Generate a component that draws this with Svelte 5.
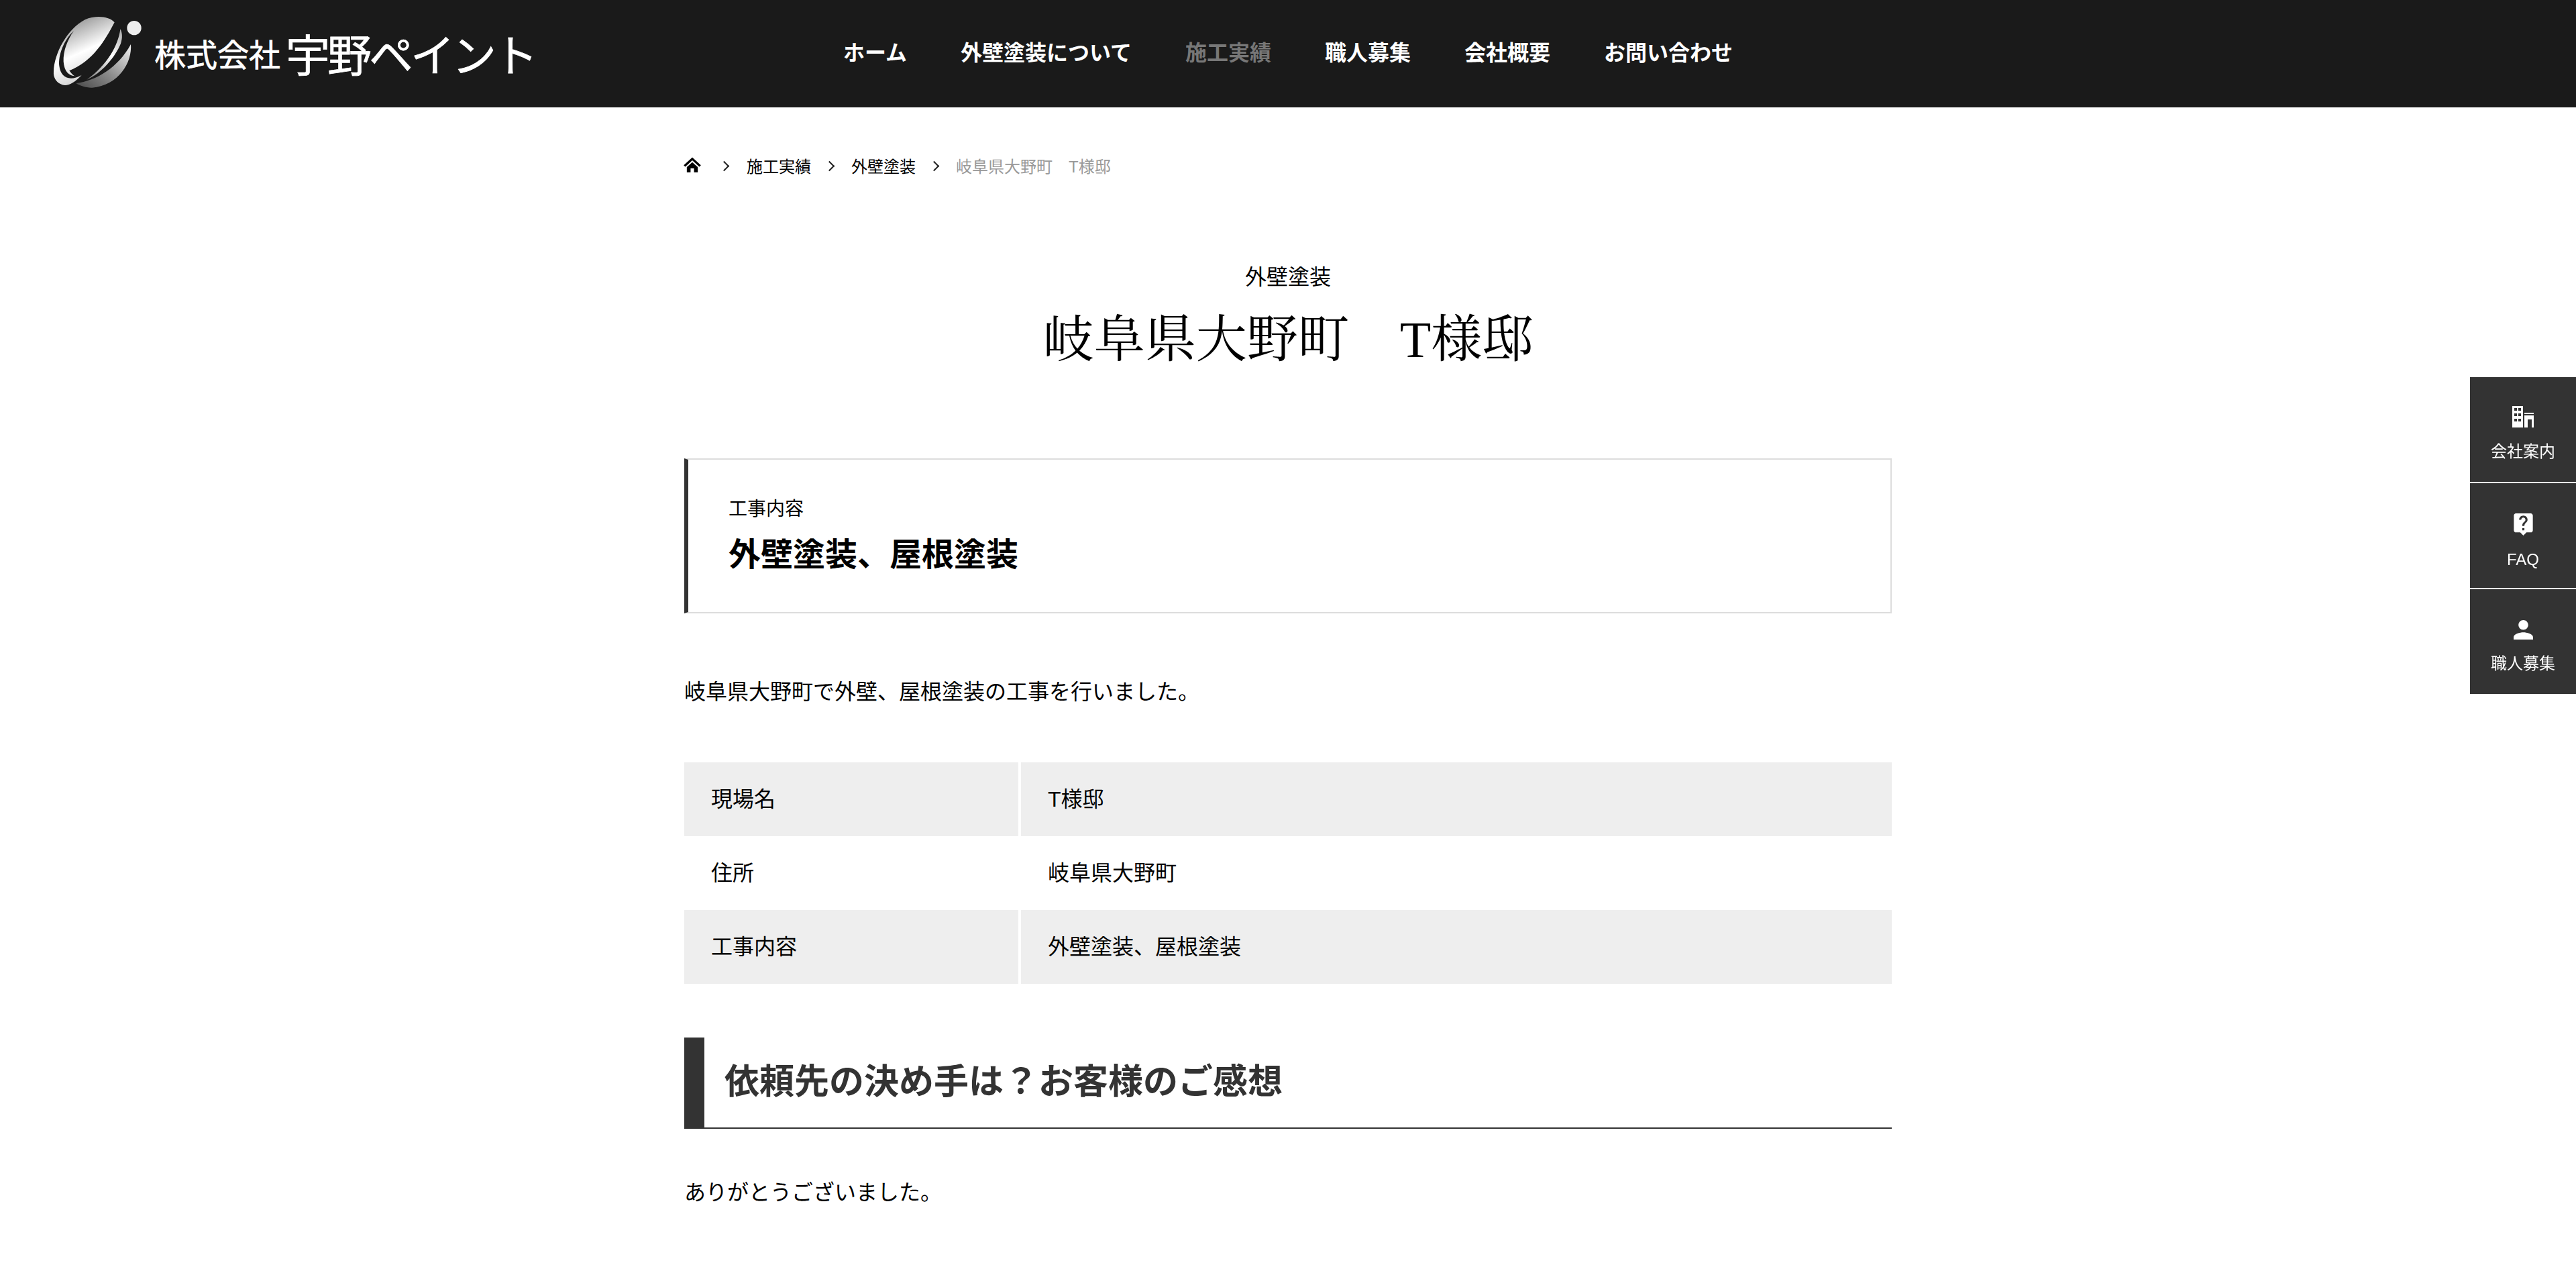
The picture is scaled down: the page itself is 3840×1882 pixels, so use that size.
<script>
	const nav = [
		{ label: 'ホーム' },
		{ label: '外壁塗装について' },
		{ label: '施工実績', current: true },
		{ label: '職人募集' },
		{ label: '会社概要' },
		{ label: 'お問い合わせ' }
	];
	const rows = [
		['現場名', 'T様邸'],
		['住所', '岐阜県大野町'],
		['工事内容', '外壁塗装、屋根塗装']
	];
</script>

<header class="site-header">
	<a class="logo" href="#top">
		<svg class="mark" viewBox="0 0 540 390" aria-hidden="true">
			<defs>
				<linearGradient id="body" x1="0.3" y1="0" x2="0.7" y2="1">
					<stop offset="0" stop-color="#8a8a8a" />
					<stop offset="0.5" stop-color="#ffffff" />
					<stop offset="1" stop-color="#c4c4c4" />
				</linearGradient>
				<linearGradient id="lower" x1="1" y1="0" x2="0" y2="1">
					<stop offset="0" stop-color="#f2f2f2" />
					<stop offset="0.55" stop-color="#8a8a8a" />
					<stop offset="1" stop-color="#4a4a4a" />
				</linearGradient>
				<linearGradient id="swoosh" x1="0" y1="1" x2="1" y2="0">
					<stop offset="0" stop-color="#777" />
					<stop offset="0.6" stop-color="#fff" />
					<stop offset="1" stop-color="#aaa" />
				</linearGradient>
			</defs>
			<path
				fill="url(#body)"
				d="M60 290C62 210 120 100 200 58C250 36 310 44 332 70C290 150 235 245 130 286C155 320 165 315 185 305C150 345 115 360 90 345C70 335 58 315 60 290Z"
			/>
			<path
				fill="#1a1a1a"
				d="M150 108C105 150 80 215 85 265C92 320 135 335 185 305C140 320 108 300 104 245C102 200 120 150 150 108Z"
			/>
			<path fill="url(#swoosh)" d="M358 100C350 170 300 262 208 326C275 298 335 225 360 165C368 140 368 118 358 100Z" />
			<path fill="url(#lower)" d="M405 168C412 250 350 352 232 362C205 363 175 352 160 342C250 332 350 270 405 168Z" />
			<circle cx="420" cy="95" r="32" fill="#eee" />
		</svg>
		<span class="logo-text"><span class="kabu">株式会社</span><span class="name">宇野ペイント</span></span>
	</a>
	<nav class="main-nav">
		{#each nav as item}
			<a href="#top" class:current={item.current}>{item.label}</a>
		{/each}
	</nav>
	<div></div>
</header>

<main class="content">
	<ol class="crumbs">
		<li>
			<svg class="home" viewBox="0 0 24 24" aria-hidden="true">
				<path d="M12 3 1 13l2 2 9-8.2L21 15l2-2z" />
				<path d="M5 15.5 12 9.3l7 6.2V22h-4.8v-5H9.8v5H5z" />
			</svg>
		</li>
		<li class="sep first"></li>
		<li>施工実績</li>
		<li class="sep"></li>
		<li>外壁塗装</li>
		<li class="sep"></li>
		<li class="here">岐阜県大野町　T様邸</li>
	</ol>

	<p class="category">外壁塗装</p>
	<h1>岐阜県大野町　T様邸</h1>

	<section class="work-box">
		<p class="work-label">工事内容</p>
		<p class="work-value">外壁塗装、屋根塗装</p>
	</section>

	<p class="lead">岐阜県大野町で外壁、屋根塗装の工事を行いました。</p>

	<table>
		<tbody>
			{#each rows as row}
				<tr>
					<th>{row[0]}</th>
					<td>{row[1]}</td>
				</tr>
			{/each}
		</tbody>
	</table>

	<h2>依頼先の決め手は？お客様のご感想</h2>
	<p class="thanks">ありがとうございました。</p>
</main>

<aside class="side-links">
	<a href="#top">
		<svg class="i-building" viewBox="0 0 32 32" aria-hidden="true">
			<path
				fill-rule="evenodd"
				d="M0 0h16v32H0zM3 3v4h4V3zM9 3v4h4V3zM3 11v4h4v-4zM9 11v4h4v-4zM3 19v4h4v-4zM9 19v4h4v-4z"
			/>
			<path d="M18 10h14v2H18zM18 14h14v18h-3V20h-6v12h-5z" />
		</svg>
		<span>会社案内</span>
	</a>
	<a href="#top">
		<svg viewBox="3 2 18 21" class="i-faq" aria-hidden="true">
			<path
				d="M19 2H5c-1.11 0-2 .9-2 2v14c0 1.1.89 2 2 2h4l3 3 3-3h4c1.1 0 2-.9 2-2V4c0-1.1-.9-2-2-2zm-6 16h-2v-2h2v2zm2.07-7.75l-.9.92C13.45 11.9 13 12.5 13 14h-2v-.5c0-1.1.45-2.1 1.17-2.83l1.24-1.26c.37-.36.59-.86.59-1.41 0-1.1-.9-2-2-2s-2 .9-2 2H8c0-2.21 1.79-4 4-4s4 1.79 4 4c0 .88-.36 1.68-.93 2.25z"
			/>
		</svg>
		<span>FAQ</span>
	</a>
	<a href="#top">
		<svg viewBox="4 4 16 16" class="i-person" aria-hidden="true">
			<path d="M12 12c2.21 0 4-1.79 4-4s-1.79-4-4-4-4 1.79-4 4 1.79 4 4 4zm0 2c-2.67 0-8 1.34-8 4v2h16v-2c0-2.66-5.33-4-8-4z" />
		</svg>
		<span>職人募集</span>
	</a>
</aside>

<style>
	:global(body) {
		background: #fff;
		color: #000;
		font-family: 'Liberation Sans', 'Noto Sans CJK JP', sans-serif;
		overflow: hidden;
	}

	a {
		color: inherit;
		text-decoration: none;
	}

	p,
	h1,
	h2,
	ol {
		margin: 0;
		padding: 0;
	}

	.site-header {
		background: #1a1a1a;
		color: #fff;
		height: 160px;
		display: grid;
		grid-template-columns: 1fr auto 1fr;
		align-items: center;
	}

	.logo {
		display: flex;
		align-items: center;
		padding-left: 60px;
	}

	.mark {
		width: 180px;
		height: 130px;
		margin-top: -10px;
		flex: none;
	}

	.logo-text {
		display: flex;
		align-items: center;
		white-space: nowrap;
		margin-left: -10px;
		margin-top: -4px;
		-webkit-text-stroke: 0.7px #fff;
	}

	.kabu {
		font-size: 47px;
	}

	.name {
		font-size: 66px;
		letter-spacing: -4px;
		margin-left: 8px;
	}

	.main-nav {
		display: flex;
		gap: 80px;
		font-size: 32px;
		font-weight: 700;
		margin-top: -8px;
	}

	.main-nav .current {
		color: #777;
	}

	.content {
		width: 1800px;
		margin: 0 auto;
	}

	.crumbs {
		list-style: none;
		display: flex;
		align-items: center;
		height: 36px;
		margin-top: 68px;
		font-size: 24px;
	}

	.home {
		display: block;
		width: 28px;
		height: 28px;
		margin: -2px 0 0 -2px;
	}

	.sep {
		width: 12px;
		height: 12px;
		margin: 0 24px;
		position: relative;
	}

	.sep.first {
		margin: 0 25px 0 30px;
	}

	.sep::before {
		content: '';
		position: absolute;
		width: 9px;
		height: 9px;
		top: 2px;
		left: -2px;
		border-top: 2px solid #222;
		border-right: 2px solid #222;
		transform: rotate(45deg);
	}

	.here {
		color: #999;
	}

	.category {
		margin-top: 125px;
		text-align: center;
		font-size: 32px;
		line-height: 48px;
	}

	h1 {
		margin-top: 19px;
		text-align: center;
		font-family: 'Liberation Serif', 'Noto Serif CJK JP', 'Noto Sans CJK JP', serif;
		font-size: 76px;
		font-weight: 400;
		line-height: 100px;
	}

	.work-box {
		box-sizing: border-box;
		height: 231px;
		margin-top: 127px;
		padding: 54px 60px 0;
		border: 2px solid #ddd;
		border-left: 6px solid #333;
	}

	.work-label {
		font-size: 28px;
		line-height: 40px;
	}

	.work-value {
		margin-top: 14px;
		font-size: 48px;
		font-weight: 700;
		line-height: 68px;
	}

	.lead {
		margin-top: 92px;
		font-size: 32px;
		line-height: 50px;
	}

	table {
		width: 100%;
		margin-top: 80px;
		border-collapse: collapse;
		table-layout: fixed;
		font-size: 32px;
	}

	tr {
		height: 110px;
	}

	tr:nth-child(odd) {
		background: #eee;
	}

	th,
	td {
		padding: 0 40px 7px;
		text-align: left;
		font-weight: 400;
	}

	th {
		width: 500px;
		box-sizing: border-box;
		border-right: 4px solid #fff;
	}

	h2 {
		box-sizing: border-box;
		display: flex;
		align-items: center;
		height: 136px;
		margin-top: 80px;
		padding: 0 0 11px 30px;
		border-left: 30px solid #333;
		border-bottom: 2px solid #333;
		color: #333;
		font-size: 52px;
		font-weight: 700;
	}

	.thanks {
		margin-top: 70px;
		font-size: 32px;
		line-height: 50px;
	}

	.side-links {
		position: fixed;
		right: 0;
		top: 562px;
		width: 158px;
		display: flex;
		flex-direction: column;
		gap: 2px;
	}

	.side-links a {
		box-sizing: border-box;
		height: 156px;
		background: #333;
		color: #fff;
		display: flex;
		flex-direction: column;
		align-items: center;
		justify-content: flex-end;
		padding-bottom: 29px;
		font-size: 24px;
		line-height: 32px;
	}

	.side-links a:nth-child(2) {
		padding-bottom: 26px;
	}

	.side-links svg {
		fill: #fff;
		display: block;
		margin-bottom: 20px;
	}

	.i-building {
		width: 32px;
		height: 32px;
	}

	.i-faq {
		width: 29px;
		height: 33px;
	}

	.i-person {
		width: 29px;
		height: 29px;
	}
</style>
